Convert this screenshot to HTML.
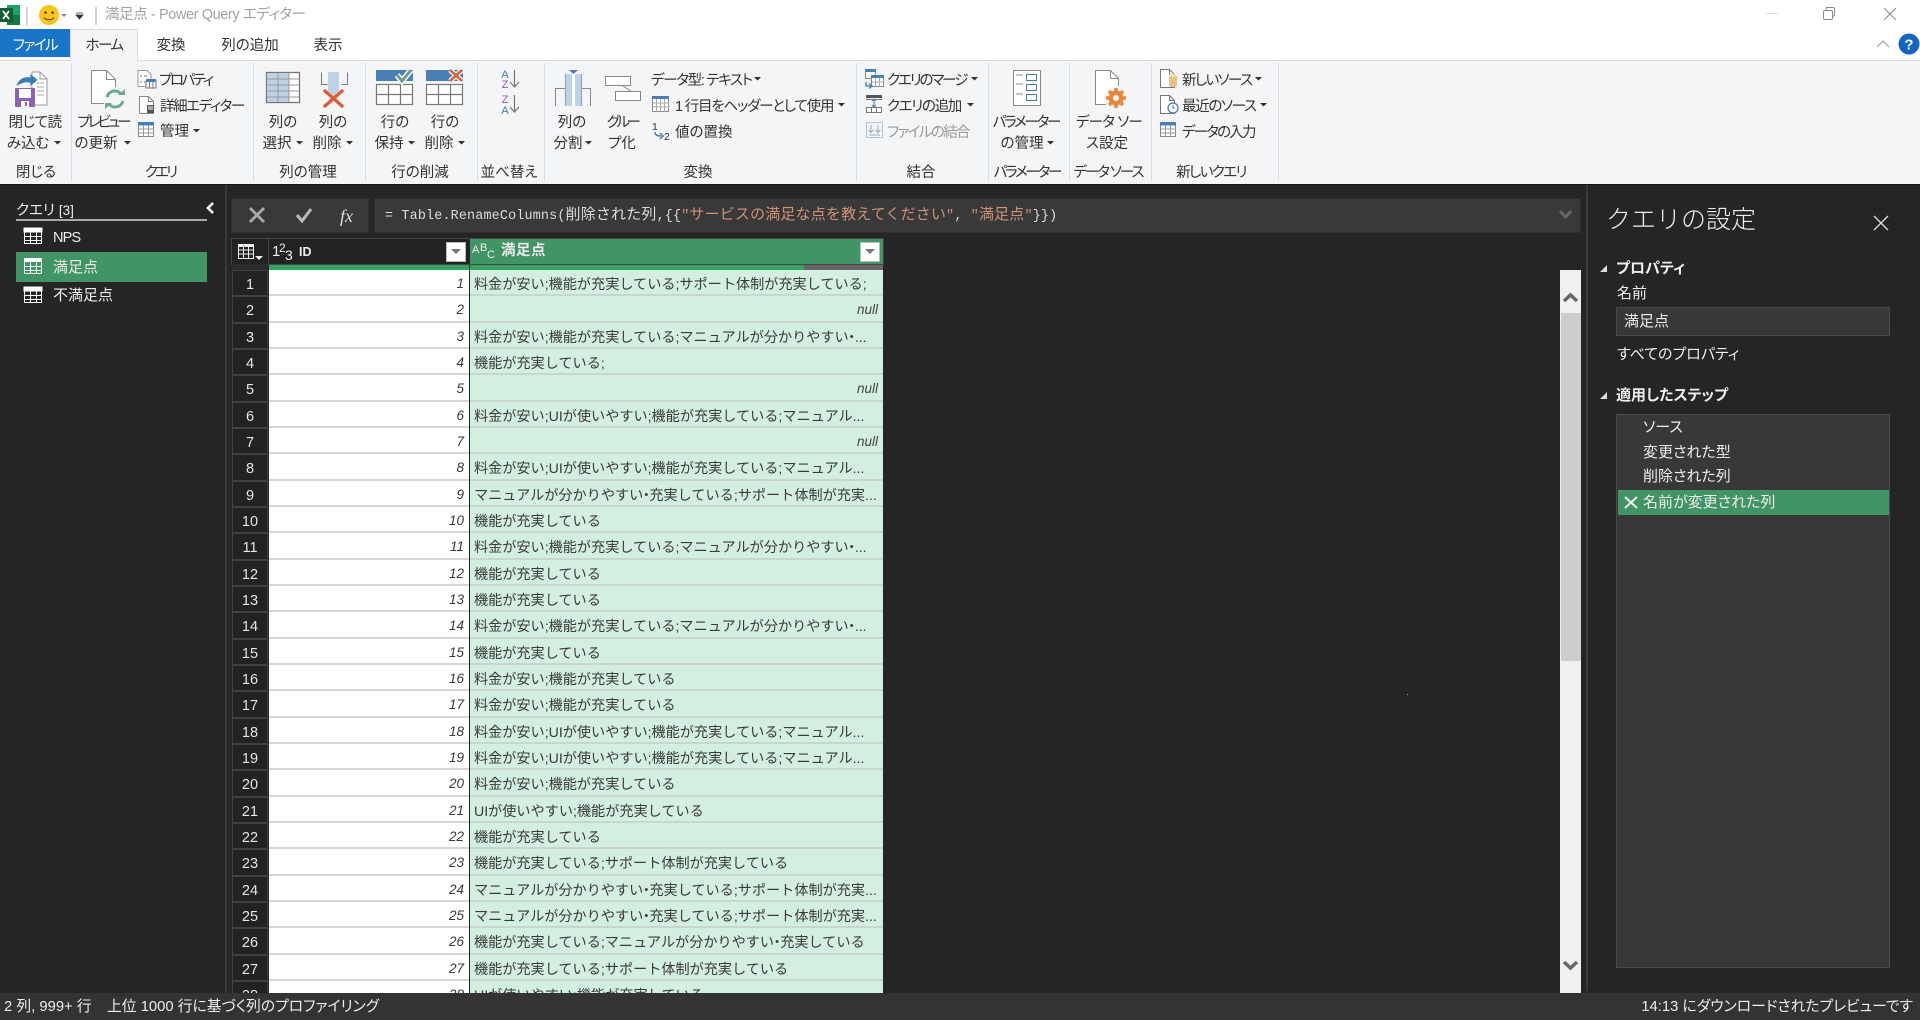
<!DOCTYPE html>
<html lang="ja"><head><meta charset="utf-8"><title>満足点 - Power Query エディター</title>
<style>
html,body{margin:0;padding:0;width:1920px;height:1020px;overflow:hidden;background:#252525}
body{position:relative;font-family:"Liberation Sans","Noto Sans CJK JP",sans-serif;font-size:14.5px;color:#333}
.a{position:absolute}
.t{position:absolute;white-space:nowrap;line-height:20px;height:20px;margin-top:2px;font-feature-settings:"palt"}
.c{transform:translateX(-50%)}
.w{color:#eee}
.b{font-weight:700}
.s{position:absolute;top:63px;height:118px;width:1px;background:#dcdfe3}
#rows{position:absolute;left:232px;top:270px;width:652px;height:723px;overflow:hidden}
.r{display:flex;height:26.333px;box-sizing:border-box;line-height:24px;font-size:14.15px;color:#3a3a3a;white-space:nowrap}
.r>span{display:block;box-sizing:border-box;height:26.333px;padding-top:2px}
.n{width:36px;background:#222;color:#e6e6e6;text-align:center;border:1px solid #404040;font-size:14.5px;margin-right:1px}
.i{width:200px;background:#fff;border-bottom:2px solid #d6d6d6;text-align:right;padding-right:5px;font-style:italic;font-size:13.5px;margin-right:1px}
.v{width:413px;background:#d3efe0;border-bottom:2px solid #c9d6cf;padding-left:4px;overflow:hidden}
.nul{text-align:right;padding-right:5px;font-style:italic;font-weight:400;font-size:13.5px;color:#444}
.d{margin:0 -4px}
</style></head>
<body>
<div class="a" style="left:0;top:0;width:1920px;height:60px;background:#fff"></div>
<div class="a" style="left:0;top:60px;width:1920px;height:124px;background:#f4f5f7;border-top:1px solid #dadbdc;box-sizing:border-box"></div>
<div class="a" style="left:0;top:29px;width:70px;height:28px;background:#1a75c9"></div>
<div class="a" style="left:70px;top:29px;width:68px;height:32px;background:#f4f5f7;border:1px solid #dadbdc;border-bottom:0;box-sizing:border-box"></div>
<div class="a" style="left:0;top:184px;width:1920px;height:1px;background:#151515"></div>

<div class="t" style="left:105px;top:3px;color:#a2a2a2;font-size:14.5px;letter-spacing:-.4px">満足点 - Power Query エディター</div>
<div class="t c" style="left:35px;top:34px;color:#fff;font-size:14.5px;letter-spacing:-1.5px">ファイル</div>
<div class="t c" style="left:104px;top:34px;font-size:14.5px;letter-spacing:-1.5px">ホーム</div>
<div class="t c" style="left:171px;top:34px;font-size:14.5px">変換</div>
<div class="t c" style="left:250px;top:34px;font-size:14.5px">列の追加</div>
<div class="t c" style="left:328px;top:34px;font-size:14.5px">表示</div>

<div class="s" style="left:71px"></div><div class="s" style="left:253px"></div><div class="s" style="left:365px"></div><div class="s" style="left:477px"></div><div class="s" style="left:544px"></div><div class="s" style="left:856px"></div><div class="s" style="left:988px"></div><div class="s" style="left:1069px"></div><div class="s" style="left:1151px"></div><div class="s" style="left:1278px"></div>

<div class="t c" style="left:35px;top:111px;letter-spacing:-.5px">閉じて読</div><div class="t c" style="left:28px;top:132px">み込む</div>
<div class="t c" style="left:103px;top:111px;letter-spacing:-3px">プレビュー</div><div class="t c" style="left:96px;top:132px">の更新</div>
<div class="t" style="left:159px;top:69px;letter-spacing:-2.400px">プロパティ</div>
<div class="t" style="left:160px;top:95px;letter-spacing:-1.400px">詳細エディター</div>
<div class="t" style="left:160px;top:120px">管理</div>
<div class="t c" style="left:283px;top:111px">列の</div><div class="t c" style="left:277px;top:132px">選択</div>
<div class="t c" style="left:333px;top:111px">列の</div><div class="t c" style="left:327px;top:132px">削除</div>
<div class="t c" style="left:395px;top:111px">行の</div><div class="t c" style="left:389px;top:132px">保持</div>
<div class="t c" style="left:445px;top:111px">行の</div><div class="t c" style="left:439px;top:132px">削除</div>
<div class="t c" style="left:572px;top:111px">列の</div><div class="t c" style="left:568px;top:132px">分割</div>
<div class="t c" style="left:622px;top:111px;letter-spacing:-3.500px">グルー</div><div class="t c" style="left:622px;top:132px">プ化</div>
<div class="t" style="left:651px;top:69px;letter-spacing:-1.300px">データ型: テキスト</div>
<div class="t" style="left:675px;top:95px;letter-spacing:-1.200px">1 行目をヘッダーとして使用</div>
<div class="t" style="left:675px;top:121px">値の置換</div>
<div class="t" style="left:887px;top:69px;letter-spacing:-2.100px">クエリのマージ</div>
<div class="t" style="left:887px;top:95px;letter-spacing:-1.300px">クエリの追加</div>
<div class="t" style="left:887px;top:121px;color:#9a9a9a;letter-spacing:-1.600px">ファイルの結合</div>
<div class="t c" style="left:1026px;top:111px;letter-spacing:-2.200px">パラメーター</div><div class="t c" style="left:1022px;top:132px">の管理</div>
<div class="t c" style="left:1109px;top:111px;letter-spacing:-.8px">データ ソー</div><div class="t c" style="left:1107px;top:132px">ス設定</div>
<div class="t" style="left:1182px;top:69px;letter-spacing:-1.600px">新しいソース</div>
<div class="t" style="left:1182px;top:95px;letter-spacing:-1.300px">最近のソース</div>
<div class="t" style="left:1182px;top:121px;letter-spacing:-1.800px">データの入力</div>

<div class="t c" style="left:36px;top:161px">閉じる</div>
<div class="t c" style="left:160px;top:161px;letter-spacing:-2.800px">クエリ</div>
<div class="t c" style="left:308px;top:161px">列の管理</div>
<div class="t c" style="left:420px;top:161px">行の削減</div>
<div class="t c" style="left:509px;top:161px">並べ替え</div>
<div class="t c" style="left:698px;top:161px">変換</div>
<div class="t c" style="left:921px;top:161px">結合</div>
<div class="t c" style="left:1027px;top:161px;letter-spacing:-2.200px">パラメーター</div>
<div class="t c" style="left:1108px;top:161px;letter-spacing:-2px">データ ソース</div>
<div class="t c" style="left:1211px;top:161px;letter-spacing:-1.600px">新しいクエリ</div>

<!-- left pane -->
<div class="a" style="left:225px;top:185px;width:2px;height:808px;background:#3a3a3a"></div>
<div class="t w" style="left:16px;top:199px">クエリ <span style="font-size:13.5px">[3]</span></div>
<div class="a" style="left:16px;top:219px;width:191px;height:2px;background:#aaa"></div>
<div class="a" style="left:16px;top:252px;width:191px;height:30px;background:#419466"></div>
<div class="t w" style="left:53px;top:226px;font-size:14.5px;letter-spacing:-.8px">NPS</div>
<div class="t w" style="left:53px;top:256px;font-size:15px">満足点</div>
<div class="t w" style="left:53px;top:284px;font-size:15px">不満足点</div>

<!-- formula bar -->
<div class="a" style="left:231px;top:198px;width:138px;height:35px;background:#393939;border:1px solid #2f2f2f;box-sizing:border-box"></div>
<div class="a" style="left:374px;top:198px;width:1207px;height:35px;background:#393939;border:1px solid #2f2f2f;box-sizing:border-box"></div>
<div class="t" style="left:340px;top:204px;font:italic 18px/20px 'Liberation Serif',serif;color:#ddd">fx</div>
<div class="t" style="left:385px;top:204px;font-family:'Liberation Mono','Noto Sans CJK JP',monospace;font-size:13.4px;letter-spacing:.17px;color:#dcdcdc;font-feature-settings:normal">= Table.RenameColumns(<span style="font-size:15px">削除された列</span>,{{<span style="color:#ce9178">"<span style="font-size:15px">サービスの満足な点を教えてください</span>"</span>, <span style="color:#ce9178">"<span style="font-size:15px">満足点</span>"</span>}})</div>

<!-- table header -->
<div class="a" style="left:231px;top:238px;width:653px;height:27px;background:#222;border:1px solid #444;box-sizing:border-box"></div>
<div class="a" style="left:268px;top:238px;width:1px;height:27px;background:#444"></div>
<div class="a" style="left:470px;top:239px;width:413px;height:25px;background:#419466"></div>
<div class="t w" style="left:272px;top:240px;font-size:15px">1</div>
<div class="t w" style="left:279px;top:236px;font-size:12px">2</div>
<div class="t w" style="left:285px;top:243px;font-size:14px">3</div>
<div class="t w b" style="left:299px;top:240px;font-size:12.5px">ID</div>
<div class="t w" style="left:472px;top:238px;font-size:11px">A</div>
<div class="t w" style="left:480px;top:236px;font-size:11px">B</div>
<div class="t w" style="left:487px;top:243px;font-size:11px">C</div>
<div class="t w b" style="left:501px;top:239px;font-size:14.5px;letter-spacing:.5px">満足点</div>
<div class="a" style="left:446px;top:242px;width:20px;height:20px;background:#fff;border:1px solid #bbb;box-sizing:border-box"></div>
<div class="a" style="left:860px;top:242px;width:20px;height:20px;background:#fff;border:1px solid #bbb;box-sizing:border-box"></div>
<div class="a" style="left:232px;top:264px;width:36px;height:6px;background:#2b2b2b"></div>
<div class="a" style="left:269px;top:265px;width:200px;height:5px;background:#34a263"></div>
<div class="a" style="left:470px;top:265px;width:334px;height:5px;background:#34a263"></div>
<div class="a" style="left:804px;top:265px;width:79px;height:5px;background:#666"></div>

<div id="rows">
<div class="r"><span class="n">1</span><span class="i">1</span><span class="v">料金が安い;機能が充実している;サポート体制が充実している;</span></div>
<div class="r"><span class="n">2</span><span class="i">2</span><span class="v nul">null</span></div>
<div class="r"><span class="n">3</span><span class="i">3</span><span class="v">料金が安い;機能が充実している;マニュアルが分かりやすい<span class="d">・</span>...</span></div>
<div class="r"><span class="n">4</span><span class="i">4</span><span class="v">機能が充実している;</span></div>
<div class="r"><span class="n">5</span><span class="i">5</span><span class="v nul">null</span></div>
<div class="r"><span class="n">6</span><span class="i">6</span><span class="v">料金が安い;UIが使いやすい;機能が充実している;マニュアル...</span></div>
<div class="r"><span class="n">7</span><span class="i">7</span><span class="v nul">null</span></div>
<div class="r"><span class="n">8</span><span class="i">8</span><span class="v">料金が安い;UIが使いやすい;機能が充実している;マニュアル...</span></div>
<div class="r"><span class="n">9</span><span class="i">9</span><span class="v">マニュアルが分かりやすい<span class="d">・</span>充実している;サポート体制が充実...</span></div>
<div class="r"><span class="n">10</span><span class="i">10</span><span class="v">機能が充実している</span></div>
<div class="r"><span class="n">11</span><span class="i">11</span><span class="v">料金が安い;機能が充実している;マニュアルが分かりやすい<span class="d">・</span>...</span></div>
<div class="r"><span class="n">12</span><span class="i">12</span><span class="v">機能が充実している</span></div>
<div class="r"><span class="n">13</span><span class="i">13</span><span class="v">機能が充実している</span></div>
<div class="r"><span class="n">14</span><span class="i">14</span><span class="v">料金が安い;機能が充実している;マニュアルが分かりやすい<span class="d">・</span>...</span></div>
<div class="r"><span class="n">15</span><span class="i">15</span><span class="v">機能が充実している</span></div>
<div class="r"><span class="n">16</span><span class="i">16</span><span class="v">料金が安い;機能が充実している</span></div>
<div class="r"><span class="n">17</span><span class="i">17</span><span class="v">料金が安い;機能が充実している</span></div>
<div class="r"><span class="n">18</span><span class="i">18</span><span class="v">料金が安い;UIが使いやすい;機能が充実している;マニュアル...</span></div>
<div class="r"><span class="n">19</span><span class="i">19</span><span class="v">料金が安い;UIが使いやすい;機能が充実している;マニュアル...</span></div>
<div class="r"><span class="n">20</span><span class="i">20</span><span class="v">料金が安い;機能が充実している</span></div>
<div class="r"><span class="n">21</span><span class="i">21</span><span class="v">UIが使いやすい;機能が充実している</span></div>
<div class="r"><span class="n">22</span><span class="i">22</span><span class="v">機能が充実している</span></div>
<div class="r"><span class="n">23</span><span class="i">23</span><span class="v">機能が充実している;サポート体制が充実している</span></div>
<div class="r"><span class="n">24</span><span class="i">24</span><span class="v">マニュアルが分かりやすい<span class="d">・</span>充実している;サポート体制が充実...</span></div>
<div class="r"><span class="n">25</span><span class="i">25</span><span class="v">マニュアルが分かりやすい<span class="d">・</span>充実している;サポート体制が充実...</span></div>
<div class="r"><span class="n">26</span><span class="i">26</span><span class="v">機能が充実している;マニュアルが分かりやすい<span class="d">・</span>充実している</span></div>
<div class="r"><span class="n">27</span><span class="i">27</span><span class="v">機能が充実している;サポート体制が充実している</span></div>
<div class="r"><span class="n">28</span><span class="i">28</span><span class="v">UIが使いやすい;機能が充実している</span></div>
</div>

<!-- scrollbar -->
<div class="a" style="left:1560px;top:270px;width:21px;height:723px;background:#f0f0f0"></div>
<div class="a" style="left:1561px;top:313px;width:20px;height:348px;background:#cdcdcd"></div>
<div class="a" style="left:1407px;top:694px;width:1px;height:1px;background:#999"></div>

<!-- right pane -->
<div class="a" style="left:1586px;top:185px;width:2px;height:806px;background:#3a3a3a"></div>
<div class="t w" style="left:1606px;top:203px;height:30px;line-height:30px;font-size:25px;font-weight:300;font-feature-settings:normal">クエリの設定</div>
<div class="t w b" style="left:1616px;top:257px;font-size:15px">プロパティ</div>
<div class="t w" style="left:1617px;top:282px;font-size:15px">名前</div>
<div class="a" style="left:1616px;top:307px;width:274px;height:29px;background:#383838;border:1px solid #4a4a4a;box-sizing:border-box"></div>
<div class="t w" style="left:1624px;top:310px;font-size:15px">満足点</div>
<div class="t w" style="left:1617px;top:343px;font-size:15px">すべてのプロパティ</div>
<div class="t w b" style="left:1616px;top:384px;font-size:15px">適用したステップ</div>
<div class="a" style="left:1616px;top:414px;width:274px;height:554px;background:#383838;border:1px solid #4a4a4a;box-sizing:border-box"></div>
<div class="a" style="left:1618px;top:490px;width:271px;height:25px;background:#419466"></div>
<div class="t w" style="left:1643px;top:416px;font-size:15px">ソース</div>
<div class="t w" style="left:1643px;top:441px;font-size:15px">変更された型</div>
<div class="t w" style="left:1643px;top:465px;font-size:15px">削除された列</div>
<div class="t w" style="left:1643px;top:491px;font-size:15px">名前が変更された列</div>

<!-- status -->
<div class="a" style="left:0;top:993px;width:1920px;height:27px;background:#333"></div>
<div class="t w" style="left:4px;top:995px;font-size:14.8px">2 列, 999+ 行</div>
<div class="t w" style="left:107px;top:995px;font-size:14.8px">上位 1000 行に基づく列のプロファイリング</div>
<div class="t w" style="right:7px;top:995px;font-size:14.8px">14:13 にダウンロードされたプレビューです</div>

<svg class="a" style="left:0;top:0" width="1920" height="1020" viewBox="0 0 1920 1020" font-family="Liberation Sans">
<!-- excel -->
<rect x="7" y="5" width="13" height="20" fill="#21a366"/><rect x="7" y="15" width="13" height="10" fill="#107c41"/>
<rect x="0" y="8" width="13" height="14" fill="#185c37"/>
<path d="M3 11l6 8M9 11l-6 8" stroke="#fff" stroke-width="1.7"/>
<path d="M27 7v18M96 7v18" stroke="#aaa"/>
<!-- smiley -->
<circle cx="49" cy="15" r="10" fill="#fcc419"/><circle cx="45.500" cy="12.500" r="1.300" fill="#444"/><circle cx="52.500" cy="12.500" r="1.300" fill="#444"/><path d="M44 17.500c2 3 8 3 10 0" stroke="#444" fill="none"/>
<path d="M61 14h6l-3 3z" fill="#888"/><path d="M76 13h7M76 15h7l-3.500 4z" stroke="#333" fill="#333" stroke-width=".8"/>
<!-- window -->
<path d="M1766 13.500h12" stroke="#ddd"/>
<rect x="1823.500" y="10.500" width="9" height="9" rx="1.500" fill="#fff" stroke="#888"/><path d="M1826 10v-1.500q0-1 1-1h6q1.500 0 1.500 1.500v6q0 1-1 1h-1.500" fill="none" stroke="#888"/>
<path d="M1884 8l12 12M1896 8l-12 12" stroke="#888"/>
<path d="M1877 47l6-6 6 6" stroke="#999" fill="none"/>
<circle cx="1909" cy="44" r="10.500" fill="#1565c0"/><text x="1909" y="49.500" fill="#fff" font-size="15" font-weight="700" text-anchor="middle">?</text>

<!-- close & load -->
<path d="M32 72h8l7 7v26H32z" fill="#fff" stroke="#999"/><path d="M40 72v7h7" fill="none" stroke="#999"/><path d="M37 83h7M37 87h7M37 91h7M37 95h7" stroke="#aaa"/>
<path d="M16 87c1-7 7-11 14-10v-4l8 7-8 7v-4c-5-1-9 0-14 4z" fill="#3f7cb5" stroke="#fff" stroke-width=".6"/>
<rect x="15" y="88" width="20" height="19" rx="1" fill="#8c63b3"/><rect x="19" y="89" width="12" height="9" fill="#fff"/><rect x="21" y="101" width="8" height="6" fill="#fff"/><rect x="25" y="102" width="2" height="4" fill="#8c63b3"/>
<!-- refresh -->
<path d="M91.500 70.500h15l9 9v24h-24z" fill="#fff" stroke="#888"/><path d="M106.500 70.500v9h9" fill="none" stroke="#888"/>
<circle cx="115" cy="99" r="12" fill="#f4f5f7"/><path d="M107 97a8 8 0 0 1 14-3M123 101a8 8 0 0 1-14 3" fill="none" stroke="#6fa890" stroke-width="3"/><path d="M118 95h7v-6zM112 103h-7v6z" fill="#6fa890"/>
<!-- properties -->
<path d="M138 70.500h9l4 4v12h-13z" fill="#fff" stroke="#999"/><path d="M140 76h2M140 82h2M144 76h3M144 82h2" stroke="#777"/>
<rect x="146" y="81" width="10" height="7" fill="#fff" stroke="#777"/><rect x="146" y="79" width="10" height="3" fill="#4a7fb5"/><path d="M149.500 82v6M153 82v6" stroke="#777"/>
<!-- advanced editor -->
<path d="M139.500 96.500h9l5 5v12h-14z" fill="#fff" stroke="#888"/><path d="M148.500 96.500v5h5" fill="none" stroke="#888"/><rect x="147" y="105" width="7" height="8" fill="#555"/><path d="M148 107h5M148 109h5" stroke="#fff"/>
<!-- manage -->
<rect x="138.500" y="122.500" width="15" height="14" fill="#fff" stroke="#888"/><rect x="138" y="122" width="16" height="3.500" fill="#4a7fb5"/><path d="M143.500 125v12M148.500 125v12M139 129h15M139 133h15" stroke="#999"/>
<!-- choose cols -->
<rect x="266.500" y="72.500" width="33" height="30" fill="#fff" stroke="#777" stroke-width="1.300"/><rect x="267" y="73" width="22" height="29" fill="#bcd0e6"/><path d="M278 73v29M289 73v29M267 79h32M267 85h32M267 91h32M267 97h32" stroke="#9a9a9a"/>
<!-- remove cols -->
<path d="M321.500 72.500v12h6M347.500 72.500v12h-6" fill="none" stroke="#777"/><path d="M328 72h11v19l-5.500 5-5.500-5z" fill="#bed2e8"/><path d="M325 91l17 15M342 91l-17 15" stroke="#db5f3b" stroke-width="3.500" stroke-linecap="round"/>
<!-- keep rows -->
<rect x="376" y="70" width="37" height="11" fill="#4a7fb5"/><rect x="376.500" y="84.500" width="36" height="20" fill="#fff" stroke="#777" stroke-width="1.200"/><path d="M388.500 84v21M400.500 84v21M377 94.500h36" stroke="#777" stroke-width="1.200"/>
<path d="M397 75l5 6 9-11" fill="none" stroke="#fff" stroke-width="6"/><path d="M397 75l5 6 9-11" fill="none" stroke="#6f9e8a" stroke-width="3"/>
<!-- remove rows -->
<rect x="426" y="70" width="37" height="11" fill="#4a7fb5"/><rect x="426.500" y="84.500" width="36" height="20" fill="#fff" stroke="#777" stroke-width="1.200"/><path d="M438.500 84v21M450.500 84v21M427 94.500h36" stroke="#777" stroke-width="1.200"/>
<path d="M450 70l12 11M462 70l-12 11" stroke="#fff" stroke-width="5"/><path d="M450 70l12 11M462 70l-12 11" stroke="#d9623f" stroke-width="2.600"/>
<!-- sort -->
<text x="505" y="78" font-size="11" fill="#3f7cb5" text-anchor="middle">A</text><text x="505" y="88" font-size="11" fill="#8a5fb0" text-anchor="middle">Z</text>
<text x="505" y="103" font-size="11" fill="#8a5fb0" text-anchor="middle">Z</text><text x="505" y="114" font-size="11" fill="#3f7cb5" text-anchor="middle">A</text>
<path d="M514.500 70v17M510 82l4.500 5 4.500-5M514.500 95v17M510 107l4.500 5 4.500-5" fill="none" stroke="#777" stroke-width="1.200"/>
<!-- caret arrows -->
<g fill="#333"><path d="M54 141h7l-3.500 3.500zM124 141h7l-3.500 3.500zM193 129h7l-3.500 3.500zM296 141h7l-3.500 3.500zM346 141h7l-3.500 3.500zM408 141h7l-3.500 3.500zM458 141h7l-3.500 3.500zM585 141h7l-3.500 3.500zM754 77h7l-3.500 3.500zM838 103h7l-3.500 3.500zM971 77h7l-3.500 3.500zM967 103h7l-3.500 3.500zM1047 141h7l-3.500 3.500zM1255 77h7l-3.500 3.500zM1260 103h7l-3.500 3.500z"/></g>
<!-- split col -->
<path d="M555.500 106V88.500h10M590.500 106V88.500h-10" fill="none" stroke="#888"/>
<rect x="565" y="74" width="17" height="32" fill="#bed2e8"/><path d="M565.500 74v32M581.500 74v32" stroke="#98a8b8" stroke-width="1.200"/><rect x="572" y="74" width="3" height="32" fill="#fff"/><path d="M569 70h9l-4.500 4z" fill="#4a7fb5"/>
<!-- group by -->
<rect x="605.500" y="76.500" width="25" height="9" fill="#fff" stroke="#888"/><rect x="615.500" y="91.500" width="25" height="9" fill="#fff" stroke="#888"/><path d="M623 86l8 5" stroke="#888"/>
<!-- first row -->
<rect x="652.500" y="96.500" width="16" height="15" fill="#fff" stroke="#888"/><rect x="652" y="96" width="17" height="3" fill="#4a7fb5"/><path d="M656.500 99v13M660.500 99v13M664.500 99v13M653 103h16M653 107h16" stroke="#aaa"/>
<!-- replace -->
<text x="652" y="130" font-size="10.500" fill="#333">1</text><text x="664" y="140" font-size="10.500" fill="#333">2</text>
<path d="M655 132c0 3 2 4 6 4" fill="none" stroke="#3f7cb5" stroke-width="1.500"/><path d="M660 133l3 3-3 3" fill="none" stroke="#3f7cb5" stroke-width="1.500"/>
<!-- merge -->
<rect x="865.500" y="69.500" width="10" height="9" fill="#fff" stroke="#888"/><rect x="865" y="69" width="11" height="3" fill="#4a7fb5"/><rect x="871.500" y="75.500" width="12" height="11" fill="#fff" stroke="#888"/><rect x="871" y="75" width="13" height="3" fill="#4a7fb5"/><path d="M875.500 78v9M879.500 78v9M872 82h12" stroke="#aaa"/>
<path d="M866 82v4h6M869 83.500l3 2.500-3 2.500" fill="none" stroke="#3f7cb5" stroke-width="1.300"/>
<!-- append -->
<rect x="866" y="95" width="16" height="3" fill="#555"/><rect x="866.500" y="107.500" width="15" height="5" fill="#fff" stroke="#777"/><path d="M871.500 107v6M876.500 107v6M866 99.500h16" stroke="#777"/>
<path d="M874 99v8M872 101l2-2 2 2M872 105l2 2 2-2" fill="none" stroke="#3f7cb5"/>
<!-- combine -->
<rect x="866.500" y="122.500" width="16" height="15" fill="none" stroke="#b4c6dc"/><path d="M871 125v7M868.500 130l2.500 2.500 2.500-2.500M878 125v7M875.500 130l2.500 2.500 2.500-2.500M869 135h11" fill="none" stroke="#9ab"/>
<!-- params -->
<rect x="1013.500" y="70.500" width="27" height="35" fill="#fff" stroke="#888"/><rect x="1026.500" y="74.500" width="10" height="6" fill="#fff" stroke="#3f7cb5"/><rect x="1026.500" y="84.500" width="10" height="6" fill="#fff" stroke="#3f7cb5"/><rect x="1026.500" y="94.500" width="10" height="6" fill="#fff" stroke="#3f7cb5"/><path d="M1016 75h7M1016 84h7M1016 94h7" stroke="#888"/>
<!-- datasource -->
<path d="M1095.500 70.500h15l8 8v26h-23z" fill="#fff" stroke="#888"/><path d="M1110.500 70.500v8h8" fill="none" stroke="#888"/>
<circle cx="1116" cy="98" r="12" fill="#f4f5f7"/><circle cx="1116" cy="98" r="5.500" fill="none" stroke="#e6883a" stroke-width="4"/><path d="M1116 88v20M1106 98h20M1109 91l14 14M1123 91l-14 14" stroke="#e6883a" stroke-width="3.500"/><circle cx="1116" cy="98" r="3" fill="#f4f5f7"/>
<!-- new source -->
<path d="M1160.500 69.500h9l5 5v13h-14z" fill="#fff" stroke="#777"/><path d="M1169.500 69.500v5h5" fill="none" stroke="#777"/><rect x="1169" y="75" width="8" height="12" rx="2" fill="#e4c288"/><ellipse cx="1173" cy="75.500" rx="4" ry="1.800" fill="#eedcb5"/>
<path d="M1160.500 95.500h9l5 5v13h-14z" fill="#fff" stroke="#777"/><path d="M1169.500 95.500v5h5" fill="none" stroke="#777"/><circle cx="1173" cy="108" r="5" fill="#fff" stroke="#3f7cb5" stroke-width="1.200"/><path d="M1173 105v3h2" fill="none" stroke="#3f7cb5"/>
<rect x="1160.500" y="122.500" width="15" height="14" fill="#fff" stroke="#888"/><rect x="1160" y="122" width="16" height="3.500" fill="#4a7fb5"/><path d="M1165.500 125v12M1170.500 125v12M1161 129h15M1161 133h15" stroke="#999"/>

<!-- query icons -->
<g fill="none" stroke="#fff"><rect x="24.500" y="228.500" width="17" height="15"/><rect x="24" y="228" width="18" height="4" fill="#fff"/><path d="M30.500 232v12M36.500 232v12M25 236.500h17M25 240.500h17"/></g>
<g fill="#419466" stroke="#fff"><rect x="24.500" y="258.500" width="17" height="15"/><path d="M30.500 262v12M36.500 262v12M25 266.500h17M25 270.500h17"/></g><rect x="24" y="258" width="18" height="4" fill="#fff"/>
<g fill="none" stroke="#fff"><rect x="24.500" y="287.500" width="17" height="15"/><rect x="24" y="287" width="18" height="4" fill="#fff"/><path d="M30.500 291v12M36.500 291v12M25 295.500h17M25 299.500h17"/></g>
<path d="M213 203l-5 5 5 5" fill="none" stroke="#fff" stroke-width="2.600"/>
<!-- formula icons -->
<path d="M250 208l14 14M264 208l-14 14" stroke="#aaa" stroke-width="2.800"/>
<path d="M297 215l5 6 9-12" fill="none" stroke="#bbb" stroke-width="3"/>
<path d="M1560 211l5.500 6 5.500-6" fill="none" stroke="#666" stroke-width="3"/>
<!-- corner icon -->
<g fill="none" stroke="#eee"><rect x="238.500" y="245.500" width="15" height="13"/><path d="M243.500 246v13M248.500 246v13M239 250h15M239 254h15"/></g><rect x="238" y="244" width="16" height="3" fill="#eee"/><path d="M255 256h8l-4 4z" fill="#eee"/>
<!-- filters -->
<path d="M451 249h10l-5 5z" fill="#777"/><path d="M865 249h10l-5 5z" fill="#777"/>
<!-- scrollbar arrows -->
<path d="M1564 301l6.500-6 6.500 6" fill="none" stroke="#666" stroke-width="3.400"/>
<path d="M1564 962l6.500 6 6.500-6" fill="none" stroke="#666" stroke-width="3.400"/>
<!-- right pane -->
<path d="M1874 216l14 14M1888 216l-14 14" stroke="#ddd" stroke-width="1.300"/>
<path d="M1600 272h7v-7zM1600 399h7v-7z" fill="#ddd"/>
<path d="M1625 497l12 11M1637 497l-12 11" stroke="#eee" stroke-width="2"/>
</svg>
</body></html>
